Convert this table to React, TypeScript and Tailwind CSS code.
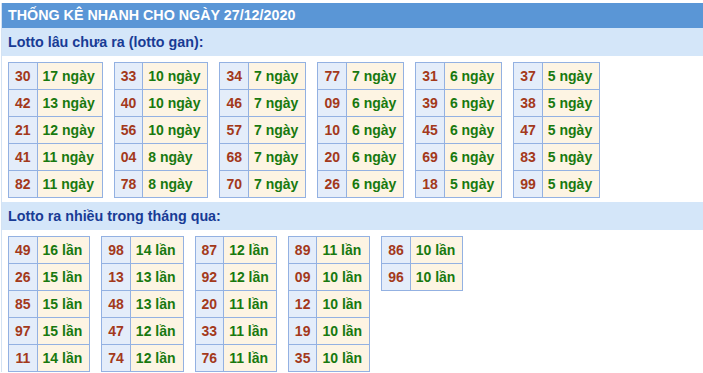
const ganTables: [string, string][][] = [
  [["30", "17 ngày"], ["42", "13 ngày"], ["21", "12 ngày"], ["41", "11 ngày"], ["82", "11 ngày"]],
  [["33", "10 ngày"], ["40", "10 ngày"], ["56", "10 ngày"], ["04", "8 ngày"], ["78", "8 ngày"]],
  [["34", "7 ngày"], ["46", "7 ngày"], ["57", "7 ngày"], ["68", "7 ngày"], ["70", "7 ngày"]],
  [["77", "7 ngày"], ["09", "6 ngày"], ["10", "6 ngày"], ["20", "6 ngày"], ["26", "6 ngày"]],
  [["31", "6 ngày"], ["39", "6 ngày"], ["45", "6 ngày"], ["69", "6 ngày"], ["18", "5 ngày"]],
  [["37", "5 ngày"], ["38", "5 ngày"], ["47", "5 ngày"], ["83", "5 ngày"], ["99", "5 ngày"]],
];

const hotTables: [string, string][][] = [
  [["49", "16 lần"], ["26", "15 lần"], ["85", "15 lần"], ["97", "15 lần"], ["11", "14 lần"]],
  [["98", "14 lần"], ["13", "13 lần"], ["48", "13 lần"], ["47", "12 lần"], ["74", "12 lần"]],
  [["87", "12 lần"], ["92", "12 lần"], ["20", "11 lần"], ["33", "11 lần"], ["76", "11 lần"]],
  [["89", "11 lần"], ["09", "10 lần"], ["12", "10 lần"], ["19", "10 lần"], ["35", "10 lần"]],
  [["86", "10 lần"], ["96", "10 lần"]],
];

const StatTable = ({ rows }: { rows: [string, string][] }) => (
  <table className="border-collapse">
    <tbody>
      {rows.map(([num, label]) => (
        <tr key={num + label}>
          <td className="border border-[#93b1e2] bg-[#e4edfa] px-[6px] py-0 h-[26px] leading-[26px] text-center text-[#a3391b]">
            {num}
          </td>
          <td className="border border-[#93b1e2] bg-[#fdf4e3] pl-[5px] pr-[7px] py-0 h-[26px] leading-[26px] text-left text-[#18790f] whitespace-nowrap">
            {label}
          </td>
        </tr>
      ))}
    </tbody>
  </table>
);

const SectionTitle = ({ children }: { children: string }) => (
  <div className="h-[28px] bg-[#d4e6f9] pl-[6px] text-[14.3px] leading-[28px] font-bold text-[#183b95]">
    {children}
  </div>
);

export default function App() {
  return (
    <div className="w-[703px] h-[373px] bg-white pt-[3px] font-['Liberation_Sans',Arial,sans-serif] overflow-hidden">
      <div className="ml-[1px] border-l border-[#d3e2f3]">
        <div className="h-[25px] bg-[#5a96d6] pl-[6px] text-[14.3px] leading-[25px] font-bold text-white">
          THỐNG KÊ NHANH CHO NGÀY 27/12/2020
        </div>

        {/* Lotto gan */}
        <SectionTitle>Lotto lâu chưa ra (lotto gan):</SectionTitle>
        <div className="flex items-start gap-[11px] pl-[6px] pt-[6px] pb-[4px] text-[14px] font-bold">
          {ganTables.map((rows, i) => (
            <StatTable key={i} rows={rows} />
          ))}
        </div>

        {/* Lotto ra nhieu */}
        <SectionTitle>Lotto ra nhiều trong tháng qua:</SectionTitle>
        <div className="flex items-start gap-[11px] pl-[6px] pt-[6px] text-[14px] font-bold">
          {hotTables.map((rows, i) => (
            <StatTable key={i} rows={rows} />
          ))}
        </div>
      </div>
    </div>
  );
}
